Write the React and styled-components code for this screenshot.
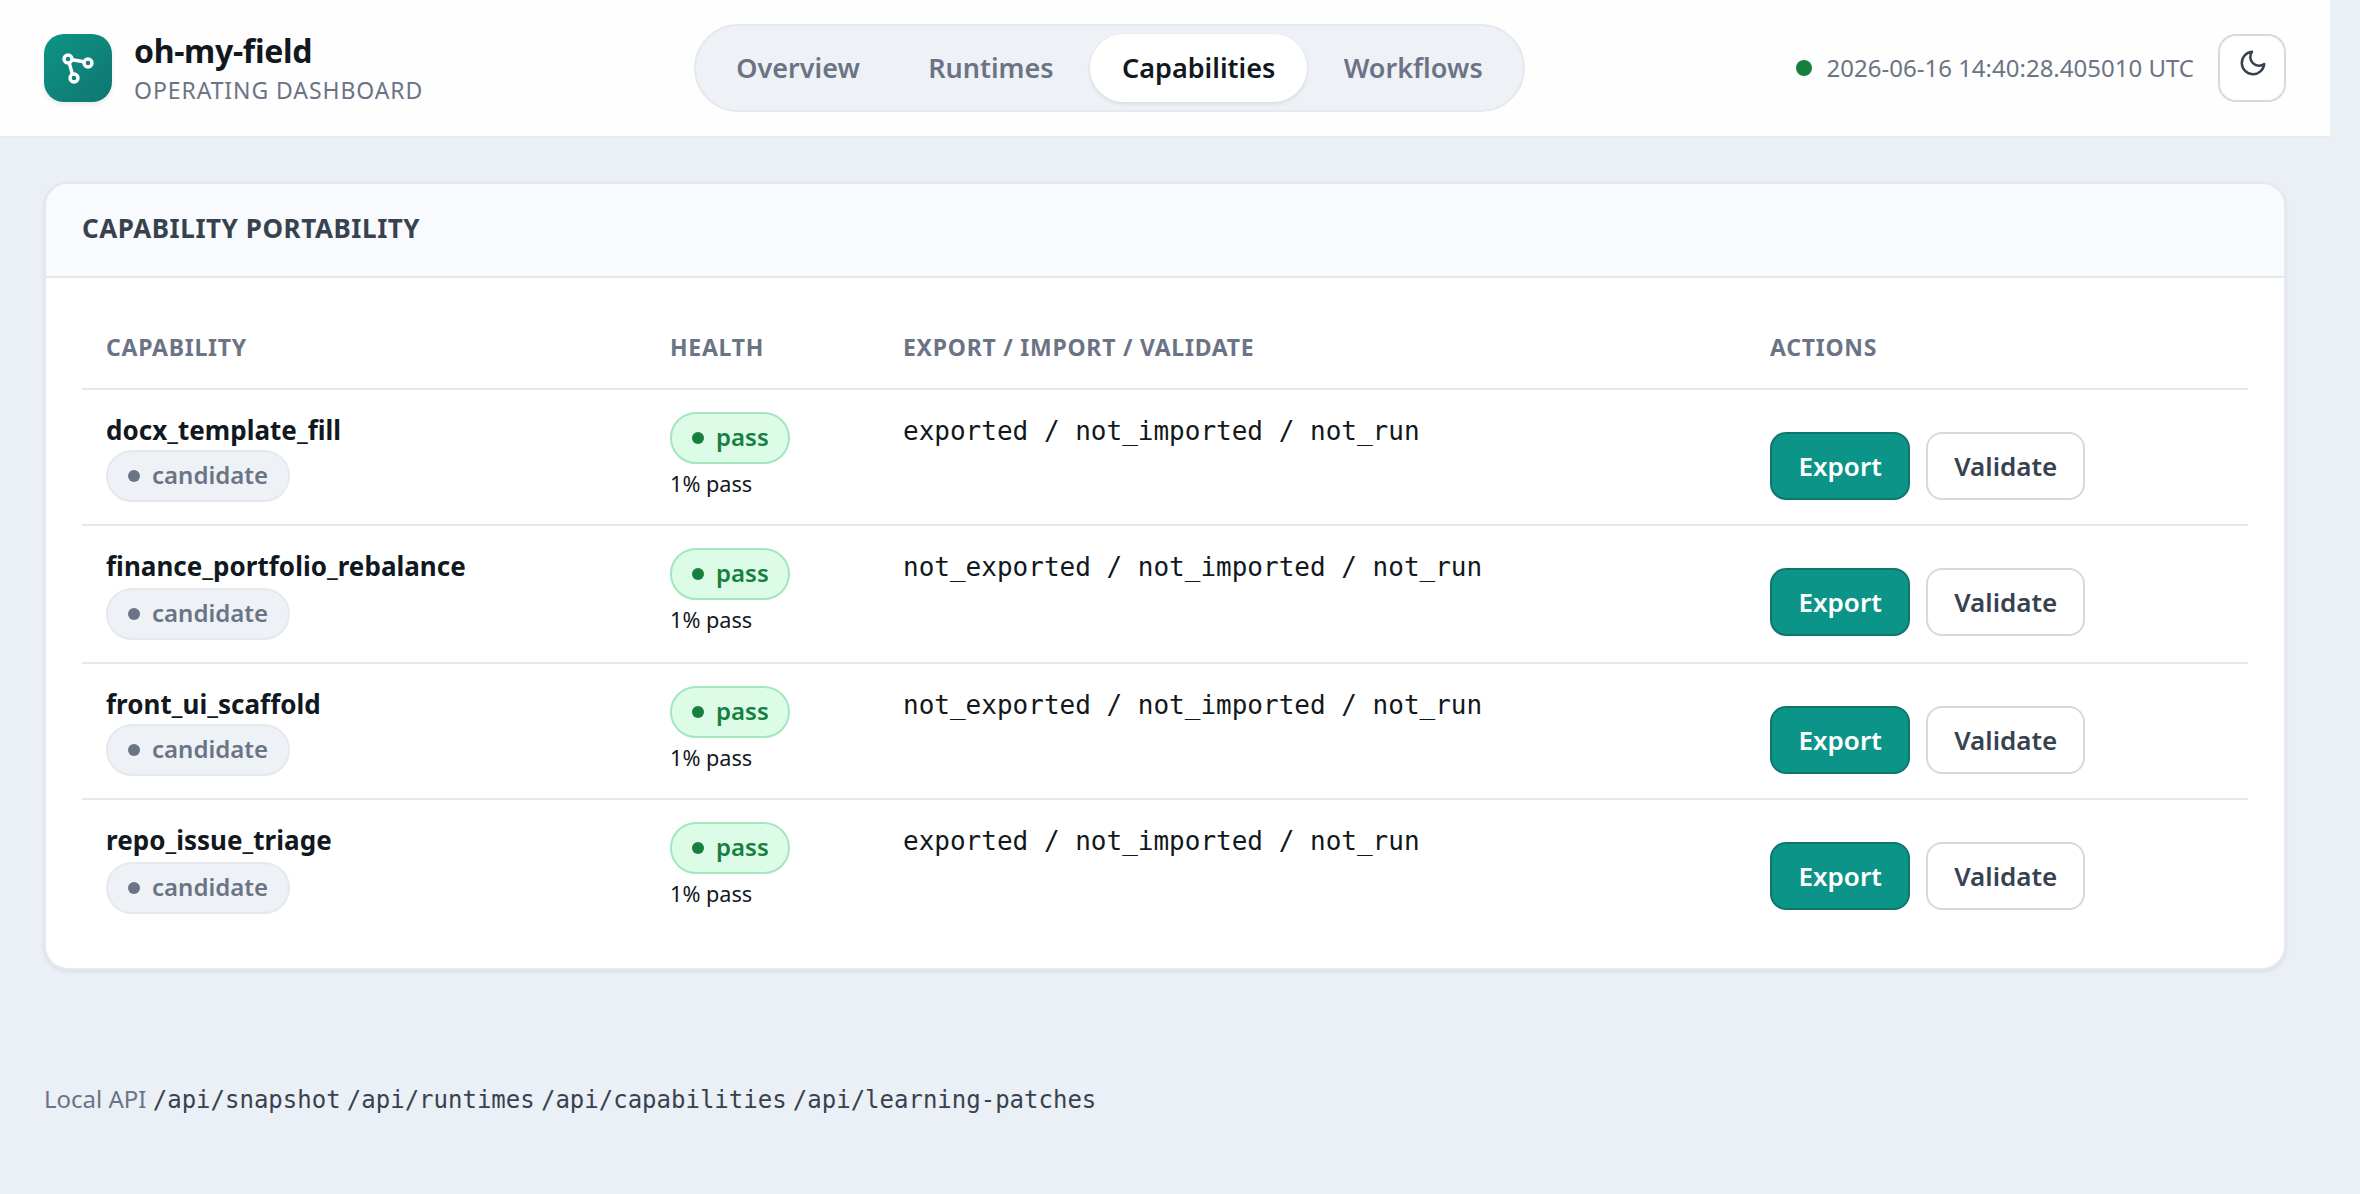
import styled, { createGlobalStyle } from "styled-components";

const GlobalStyle = createGlobalStyle`
  * { box-sizing: border-box; }
  body {
    margin: 0;
    background: #ebeff6;
    color: #111820;
    font-family: "Noto Sans", sans-serif;
    font-size: 26px;
  }
  button { font-family: inherit; }
`;

const Page = styled.div`
  width: 2330px;
  height: 1194px;
`;

const Header = styled.header`
  display: flex;
  justify-content: space-between;
  align-items: center;
  height: 138px;
  padding: 0 44px;
  background: #fefefe;
  border-bottom: 2px solid #e6e9ee;
`;

const Brand = styled.div`
  display: flex;
  align-items: center;
  gap: 22px;
`;

const BrandText = styled.div`
  padding-top: 3px;
`;

const Logo = styled.div`
  display: flex;
  align-items: center;
  justify-content: center;
  width: 68px;
  height: 68px;
  border-radius: 20px;
  color: #fff;
  background: linear-gradient(135deg, #0d9488, #0f766e);
  box-shadow: 0 2px 4px rgba(16, 24, 40, 0.1);
`;

const BrandName = styled.div`
  font-size: 32px;
  font-weight: 700;
  line-height: 40px;
  letter-spacing: -0.32px;
`;

const BrandSub = styled.div`
  font-size: 23px;
  line-height: 38px;
  letter-spacing: 0.92px;
  color: #6b7485;
`;

const Nav = styled.nav`
  display: flex;
  gap: 4px;
  height: 88px;
  padding: 8px;
  border: 2px solid #e5e8ec;
  border-radius: 44px;
  background: #eef2f7;
`;

const Tab = styled.button`
  height: 68px;
  padding: 0 32.2px 2px;
  border: 0;
  border-radius: 34px;
  font-size: 27px;
  font-weight: 600;
  color: ${(p) => (p.$active ? "#111820" : "#6b7485")};
  background: ${(p) => (p.$active ? "#fff" : "transparent")};
  box-shadow: ${(p) => (p.$active ? "0 2px 4px rgba(16, 24, 40, 0.1)" : "none")};
`;

const Status = styled.div`
  display: flex;
  align-items: center;
  font-size: 24px;
  color: #6b7485;
`;

const Timestamp = styled.span`
  padding-bottom: 2px;
`;

const LiveDot = styled.span`
  width: 16px;
  height: 16px;
  margin-right: 15px;
  border-radius: 50%;
  background: #15803d;
`;

const ThemeButton = styled.button`
  display: flex;
  align-items: center;
  justify-content: center;
  width: 68px;
  height: 68px;
  margin-left: 24px;
  padding: 0 0 10px 2px;
  border: 2px solid #d5d9e2;
  border-radius: 18px;
  background: #fff;
  color: #37404c;
`;

const Card = styled.section`
  margin: 44px 44px 0;
  height: 788px;
  border: 2px solid #e5e8ec;
  border-radius: 24px;
  background: #fff;
  overflow: hidden;
  box-shadow: 0 2px 4px rgba(16, 24, 40, 0.08);
`;

const CardTitle = styled.h2`
  height: 94px;
  margin: 0;
  padding: 0 36px 4px;
  border-bottom: 2px solid #e5e8ec;
  background: #f8fafd;
  font-size: 26px;
  font-weight: 700;
  line-height: 88px;
  letter-spacing: 0.56px;
  color: #37424f;
`;

const Table = styled.div`
  padding: 36px;
`;

const Row = styled.div`
  display: grid;
  grid-template-columns: 564px 233px 867px 502px;
  height: ${(p) => p.$height}px;
  border-bottom: ${(p) => (p.$last ? "0" : "2px solid #e5e8ec")};
`;

const HeadCell = styled.div`
  padding: 0 24px;
  font-size: 23px;
  font-weight: 700;
  line-height: 66px;
  letter-spacing: 0.74px;
  color: #6b7485;
`;

const Cell = styled.div`
  padding: 22px 24px 0;
`;

const Name = styled.div`
  font-weight: 700;
  line-height: 36px;
  letter-spacing: 0.03px;
  height: ${(p) => p.$height}px;
`;

const Pill = styled.span`
  display: flex;
  align-items: center;
  gap: 12px;
  width: fit-content;
  height: 52px;
  padding: 0 ${(p) => (p.$ok ? 19 : 20)}px 0 20px;
  border: 2px solid ${(p) => (p.$ok ? "#a3e6c0" : "#e5e8ec")};
  border-radius: 26px;
  background: ${(p) => (p.$ok ? "#dcfce7" : "#eef2f7")};
  color: ${(p) => (p.$ok ? "#15803d" : "#6b7485")};
  font-size: 24px;
  font-weight: 600;
  line-height: 46px;

  &::before {
    content: "";
    width: 12px;
    height: 12px;
    border-radius: 50%;
    background: currentColor;
  }
`;

const PillText = styled.span`
  padding-bottom: 2px;
`;

const Rate = styled.div`
  margin-top: 3px;
  font-size: 21.67px;
  line-height: 34px;
`;

const Ports = styled.code`
  display: block;
  font-family: "DejaVu Sans Mono", monospace;
  font-size: 26px;
  line-height: 38px;
`;

const Actions = styled.div`
  display: flex;
  gap: 16px;
  margin-top: 20px;
`;

const Button = styled.button`
  height: 68px;
  padding: 0 ${(p) => (p.$primary ? 26.5 : 26)}px;
  border: 2px solid ${(p) => (p.$primary ? "#0f766e" : "#d5d9e2")};
  border-radius: 16px;
  background: ${(p) => (p.$primary ? "#0d9488" : "#fff")};
  color: ${(p) => (p.$primary ? "#fff" : "#37424f")};
  font-size: 26px;
  font-weight: 600;
`;

const Footer = styled.footer`
  margin: 110px 44px 0;
  font-size: 24px;
  line-height: 38px;
  color: #6b7485;

  code {
    font-family: "DejaVu Sans Mono", monospace;
    font-size: 24px;
    color: #37424f;
  }
`;

const tabs = ["Overview", "Runtimes", "Capabilities", "Workflows"];

const capabilities = [
  { name: "docx_template_fill", ports: "exported / not_imported / not_run", height: 136, nameHeight: 38 },
  { name: "finance_portfolio_rebalance", ports: "not_exported / not_imported / not_run", height: 138, nameHeight: 40 },
  { name: "front_ui_scaffold", ports: "not_exported / not_imported / not_run", height: 136, nameHeight: 38 },
  { name: "repo_issue_triage", ports: "exported / not_imported / not_run", height: 132, nameHeight: 40 },
];

const endpoints = ["/api/snapshot", "/api/runtimes", "/api/capabilities", "/api/learning-patches"];

const GraphIcon = () => (
  <svg width="36" height="36" viewBox="0 0 36 36" fill="none" stroke="currentColor" strokeWidth="3.4">
    <circle cx="8" cy="9" r="4" />
    <circle cx="28" cy="13" r="4" />
    <circle cx="14" cy="28" r="4" />
    <path d="M12 9.8l12 2M9.2 13l3.2 11" />
  </svg>
);

const MoonIcon = () => (
  <svg width="30" height="30" viewBox="0 0 24 24" fill="none" stroke="currentColor" strokeWidth="2" strokeLinejoin="round">
    <path d="M21 12.79A9 9 0 1 1 11.21 3 7 7 0 0 0 21 12.79z" />
  </svg>
);

export default function App() {
  return (
    <Page>
      <GlobalStyle />
      <Header>
        <Brand>
          <Logo>
            <GraphIcon />
          </Logo>
          <BrandText>
            <BrandName>oh-my-field</BrandName>
            <BrandSub>OPERATING DASHBOARD</BrandSub>
          </BrandText>
        </Brand>
        <Nav>
          {tabs.map((tab) => (
            <Tab key={tab} $active={tab === "Capabilities"}>
              {tab}
            </Tab>
          ))}
        </Nav>
        <Status>
          <LiveDot />
          <Timestamp>2026-06-16 14:40:28.405010 UTC</Timestamp>
          <ThemeButton aria-label="Toggle theme">
            <MoonIcon />
          </ThemeButton>
        </Status>
      </Header>

      <Card>
        <CardTitle>CAPABILITY PORTABILITY</CardTitle>
        <Table>
          <Row $height={76}>
            <HeadCell>CAPABILITY</HeadCell>
            <HeadCell>HEALTH</HeadCell>
            <HeadCell>EXPORT / IMPORT / VALIDATE</HeadCell>
            <HeadCell>ACTIONS</HeadCell>
          </Row>
          {capabilities.map((item, i) => (
            <Row key={item.name} $height={item.height} $last={i === capabilities.length - 1}>
              <Cell>
                <Name $height={item.nameHeight}>{item.name}</Name>
                <Pill>
                  <PillText>candidate</PillText>
                </Pill>
              </Cell>
              <Cell>
                <Pill $ok>
                  <PillText>pass</PillText>
                </Pill>
                <Rate>1% pass</Rate>
              </Cell>
              <Cell>
                <Ports>{item.ports}</Ports>
              </Cell>
              <Cell>
                <Actions>
                  <Button $primary>Export</Button>
                  <Button>Validate</Button>
                </Actions>
              </Cell>
            </Row>
          ))}
        </Table>
      </Card>

      <Footer>
        Local API{" "}
        {endpoints.map((path) => (
          <span key={path}>
            <code>{path}</code>{" "}
          </span>
        ))}
      </Footer>
    </Page>
  );
}
